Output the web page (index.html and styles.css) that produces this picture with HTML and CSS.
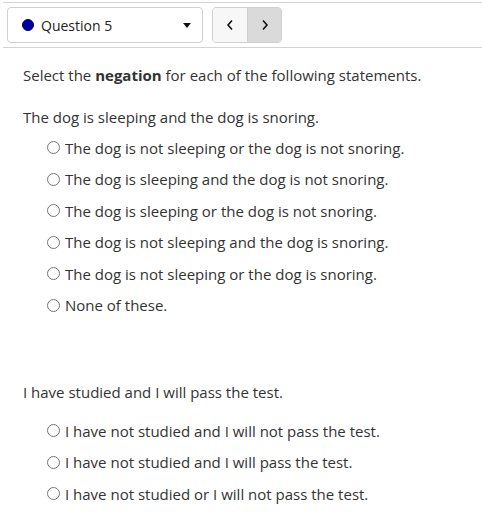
FILE: index.html
```html
<!DOCTYPE html>
<html lang="en">
<head>
    <meta charset="UTF-8" />
    <title>Question 5</title>
    <link rel="stylesheet" href="styles.css">
</head>
<body>

<div class="question-nav">
    <div class="question-select">
        <span class="status-dot"></span>
        <span class="question-label">Question 5</span>
        <span class="caret"></span>
    </div>
    <div class="nav-buttons">
        <button class="nav-btn">
            <svg width="8" height="12" viewBox="0 0 8 12"><path d="M6 1.5 L2 6 L6 10.5" fill="none" stroke="#111" stroke-width="1.6"/></svg>
        </button>
        <button class="nav-btn active">
            <svg width="8" height="12" viewBox="0 0 8 12"><path d="M2 1.5 L6 6 L2 10.5" fill="none" stroke="#111" stroke-width="1.6"/></svg>
        </button>
    </div>
</div>

<div class="content">
    <p class="intro">Select the <b>negation</b> for each of the following statements.</p>

    <p class="stem">The dog is sleeping and the dog is snoring.</p>
    <ul class="options first-set">
        <li><label><input type="radio" name="q1"> The dog is not sleeping or the dog is not snoring.</label></li>
        <li><label><input type="radio" name="q1"> The dog is sleeping and the dog is not snoring.</label></li>
        <li><label><input type="radio" name="q1"> The dog is sleeping or the dog is not snoring.</label></li>
        <li><label><input type="radio" name="q1"> The dog is not sleeping and the dog is snoring.</label></li>
        <li><label><input type="radio" name="q1"> The dog is not sleeping or the dog is snoring.</label></li>
        <li><label><input type="radio" name="q1"> None of these.</label></li>
    </ul>

    <p class="stem second">I have studied and I will pass the test.</p>
    <ul class="options second-set">
        <li><label><input type="radio" name="q2"> I have not studied and I will not pass the test.</label></li>
        <li><label><input type="radio" name="q2"> I have not studied and I will pass the test.</label></li>
        <li><label><input type="radio" name="q2"> I have not studied or I will not pass the test.</label></li>
    </ul>
</div>

</body>
</html>
```

FILE: styles.css
```css
* {
    box-sizing: border-box;
}

body {
    margin: 0;
    font-family: 'Open Sans', sans-serif;
    color: #333;
    background: white;
}

/* Top navigation */
.question-nav {
    display: flex;
    align-items: center;
    margin: 2px 0 0 3px;
    padding: 4px;
    border-top: 1px solid #d3d3d3;
    border-bottom: 1px solid #d3d3d3;
}

.question-select {
    display: flex;
    align-items: center;
    width: 196px;
    height: 36px;
    padding: 0 11px 0 14px;
    border: 1px solid #d0d0d0;
    border-radius: 4px;
    background: white;
}

.status-dot {
    width: 12px;
    height: 12px;
    border-radius: 50%;
    background: #0000a8;
    border: 1px solid #000050;
    margin-right: 7px;
    margin-top: -1px;
}

.question-label {
    flex: 1;
    font-size: 14px;
    color: #222;
}

.caret {
    width: 0;
    height: 0;
    border-left: 4px solid transparent;
    border-right: 4px solid transparent;
    border-top: 5px solid #111;
}

.nav-buttons {
    display: flex;
    margin-left: 9px;
    border: 1px solid #d0d0d0;
    border-radius: 4px;
    overflow: hidden;
}

.nav-btn {
    width: 34px;
    height: 34px;
    padding: 0;
    border: none;
    background: #f7f7f7;
    display: flex;
    align-items: center;
    justify-content: center;
}

.nav-btn + .nav-btn {
    border-left: 1px solid #d0d0d0;
}

.nav-btn.active {
    background: #dadada;
}

/* Questions */
.content {
    padding: 16px 0 0 23px;
    font-size: 15px;
}

.intro {
    margin: 0 0 20px;
    line-height: 22px;
}

.stem {
    margin: 0;
    line-height: 22px;
}

.stem.second {
    margin-top: 60px;
}

.options {
    list-style: none;
    margin: 4px 0 0;
    padding: 0 0 0 24px;
}

.options.second-set {
    margin-top: 12px;
}

.options li {
    height: 31.5px;
    display: flex;
    align-items: center;
}

.options label {
    display: flex;
    align-items: center;
}

.options input[type="radio"] {
    width: 13px;
    height: 13px;
    margin: 0 5px 0 0;
}
```
